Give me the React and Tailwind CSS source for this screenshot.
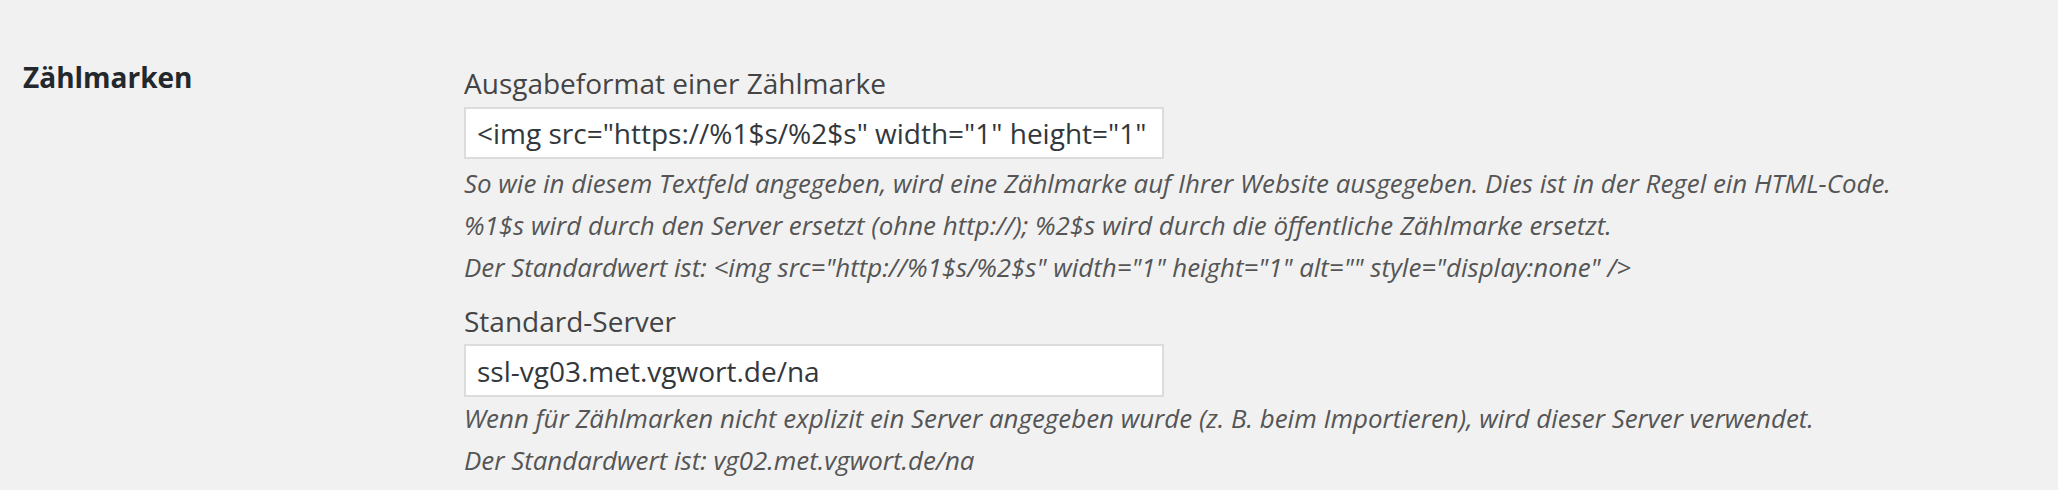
export default function App() {
  const font = { fontFamily: '"Open Sans", "Noto Sans", sans-serif' };
  return (
    <div className="w-[2058px] h-[490px] bg-[#f1f1f1] overflow-hidden" style={font}>
      <div className="flex pl-[23px] pt-[59px]">
        <div className="w-[441px] shrink-0">
          <h2 className="text-[28px] leading-[36px] font-bold text-[#23282d]">Zählmarken</h2>
        </div>
        <div className="flex flex-col">
          <label className="text-[28px] leading-[36px] text-[#444] mt-[6px]">Ausgabeformat einer Zählmarke</label>
          <div className="mt-[6px] w-[700px] h-[52px] border-2 border-[#dcdcdc] bg-white pl-[11px] flex items-center text-[28px] text-[#32373c] whitespace-nowrap">
            {'<img src="https://%1$s/%2$s" width="1" height="1"'}
          </div>
          <p className="mt-[3px] text-[25.9px] leading-[42px] italic text-[#555]">
            So wie in diesem Textfeld angegeben, wird eine Zählmarke auf Ihrer Website ausgegeben. Dies ist in der Regel ein HTML-Code.<br />
            %1$s wird durch den Server ersetzt (ohne http://); %2$s wird durch die öffentliche Zählmarke ersetzt.<br />
            {'Der Standardwert ist: <img src="http://%1$s/%2$s" width="1" height="1" alt="" style="display:none" />'}
          </p>
          <label className="mt-[15px] text-[28px] leading-[36px] text-[#444]">Standard-Server</label>
          <div className="mt-[5px] w-[700px] h-[53px] border-2 border-[#dcdcdc] bg-white pl-[11px] flex items-center text-[28px] text-[#32373c] whitespace-nowrap">
            ssl-vg03.met.vgwort.de/na
          </div>
          <p className="mt-[0px] text-[25.9px] leading-[42px] italic text-[#555]">
            Wenn für Zählmarken nicht explizit ein Server angegeben wurde (z. B. beim Importieren), wird dieser Server verwendet.<br />
            Der Standardwert ist: vg02.met.vgwort.de/na
          </p>
        </div>
      </div>
    </div>
  );
}
